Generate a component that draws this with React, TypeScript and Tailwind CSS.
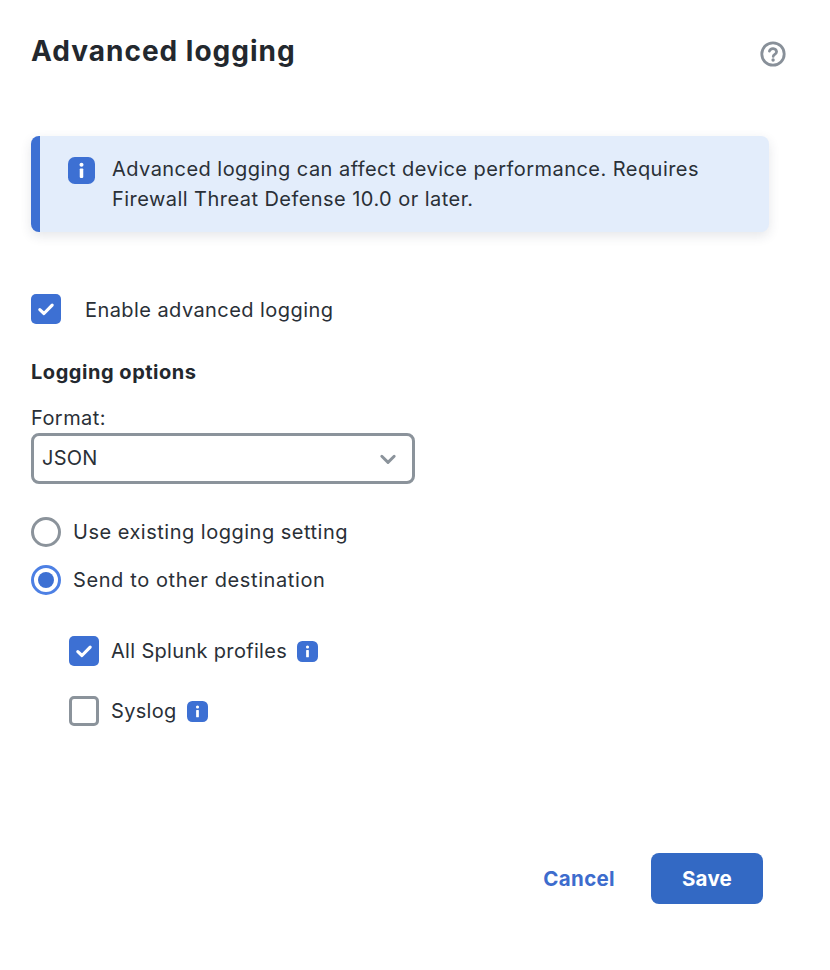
const fontStyle = "font-['Inter',sans-serif]";

function InfoBadge({ className }: { className: string }) {
  return (
    <svg viewBox="0 0 20 20" className={className}>
      <rect width="20" height="20" rx="5" fill="#3d70d3" />
      <circle cx="10" cy="5.7" r="1.5" fill="#fff" />
      <rect x="8.7" y="8.5" width="2.6" height="7" rx="0.6" fill="#fff" />
    </svg>
  );
}

function Check({ on }: { on: boolean }) {
  return on ? (
    <div className="flex h-[30px] w-[30px] shrink-0 items-center justify-center rounded-[5px] bg-[#3d70d3]">
      <svg viewBox="0 0 16 16" className="h-[18px] w-[18px]" fill="none" stroke="#fff" strokeWidth="2.8" strokeLinecap="round" strokeLinejoin="round">
        <path d="M2.5 8.5 6.2 12 13.5 4.5" />
      </svg>
    </div>
  ) : (
    <div className="h-[30px] w-[30px] shrink-0 rounded-[5px] border-[3px] border-[#8b939b] bg-white" />
  );
}

export default function App() {
  return (
    <div className={`${fontStyle} h-[970px] w-[830px] bg-white text-[#2a3037]`}>
      <div className="flex flex-col px-[31px] pt-[31px]">
        <div className="flex items-start justify-between pr-[12px]">
          <h1 className="text-[28px] font-bold leading-[40px] tracking-[1px] text-[#23282e]">Advanced logging</h1>
          <svg viewBox="0 0 28 28" className="mt-[9px] h-[28px] w-[28px]" fill="none">
            <circle cx="14" cy="14" r="11.2" stroke="#889099" strokeWidth="2.8" />
            <path d="M10.4 11.2a3.7 3.7 0 0 1 7.2 0.6c0 2.4-3.4 2.6-3.4 4.6" stroke="#889099" strokeWidth="2.7" strokeLinecap="round" />
            <circle cx="14.1" cy="20" r="1.7" fill="#889099" />
          </svg>
        </div>

        <div className="mt-[65px] flex h-[96px] w-[738px] gap-[17px] rounded-[8px] border-l-[9px] border-[#3d70d3] bg-[#e3edfb] pl-[28px] pr-[40px] pt-[18px] shadow-[0_4px_12px_rgba(40,50,70,0.12)]">
          <InfoBadge className="mt-[3px] h-[27px] w-[27px] shrink-0" />
          <p className="text-[20px] leading-[30px] tracking-[0.45px]">
            Advanced logging can affect device performance. Requires Firewall Threat Defense 10.0 or later.
          </p>
        </div>

        <label className="mt-[62px] flex items-center gap-[24px]">
          <Check on />
          <span className="pt-[2px] text-[20px] leading-[28px] tracking-[0.43px]">Enable advanced logging</span>
        </label>

        <h2 className="mt-[33px] text-[20px] font-bold leading-[30px] tracking-[0.53px] text-[#23282e]">Logging options</h2>

        <div className="mt-[16px] text-[20px] leading-[30px] tracking-[0.43px]">Format:</div>
        <div className="flex h-[51px] w-[384px] items-center justify-between rounded-[8px] border-[3px] border-[#8b939b] pl-[8px] pr-[15px] text-[20px]">
          <span className="pb-[2px] tracking-[0.25px]">JSON</span>
          <svg viewBox="0 0 16 16" className="h-[18px] w-[18px]" fill="none" stroke="#8b939b" strokeWidth="2.6" strokeLinecap="round" strokeLinejoin="round">
            <path d="M2.5 5.5 8 11l5.5-5.5" />
          </svg>
        </div>

        <div className="mt-[33px] flex items-center gap-[12px]">
          <div className="h-[30px] w-[30px] rounded-full border-[3px] border-[#8b939b]" />
          <span className="text-[20px] leading-[30px] tracking-[0.5px]">Use existing logging setting</span>
        </div>
        <div className="mt-[18px] flex items-center gap-[12px]">
          <div className="flex h-[30px] w-[30px] items-center justify-center rounded-full border-[3px] border-[#4d80e4]">
            <div className="h-[16px] w-[16px] rounded-full bg-[#3d70d3]" />
          </div>
          <span className="text-[20px] leading-[30px] tracking-[0.6px]">Send to other destination</span>
        </div>

        <div className="mt-[41px] flex flex-col gap-[30px] pl-[38px]">
          <div className="flex items-center gap-[12px]">
            <Check on />
            <div className="flex items-center gap-[10px]">
              <span className="text-[20px] leading-[30px] tracking-[0.32px]">All Splunk profiles</span>
              <InfoBadge className="h-[21px] w-[21px]" />
            </div>
          </div>
          <div className="flex items-center gap-[12px]">
            <Check on={false} />
            <div className="flex items-center gap-[10px]">
              <span className="text-[20px] leading-[30px] tracking-[0.32px]">Syslog</span>
              <InfoBadge className="h-[21px] w-[21px]" />
            </div>
          </div>
        </div>

        <div className="mt-[127px] flex w-[732px] items-center justify-end gap-[36px]">
          <button className="pt-[2px] text-[20.5px] font-bold tracking-[0.33px] text-[#3d6ccd]">Cancel</button>
          <button className="h-[51px] w-[112px] rounded-[8px] bg-[#3369c4] pt-[2px] text-[20.5px] font-bold tracking-[0.25px] text-white">Save</button>
        </div>
      </div>
    </div>
  );
}
